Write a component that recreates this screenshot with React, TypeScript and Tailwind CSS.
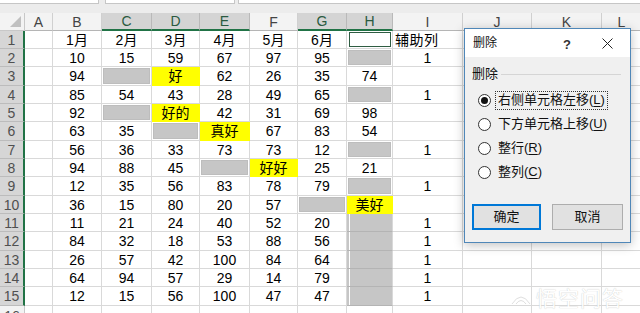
import React from "react";

type Col = { k: string; w: string; sel: boolean };
const cols: Col[] = [
  { k: "A", w: "w-[28px]", sel: false },
  { k: "B", w: "w-[49px]", sel: false },
  { k: "C", w: "w-[50px]", sel: true },
  { k: "D", w: "w-[48px]", sel: true },
  { k: "E", w: "w-[50px]", sel: true },
  { k: "F", w: "w-[48px]", sel: false },
  { k: "G", w: "w-[49px]", sel: true },
  { k: "H", w: "w-[46px]", sel: true },
  { k: "I", w: "w-[70px]", sel: false },
  { k: "J", w: "w-[69px]", sel: false },
  { k: "K", w: "w-[70px]", sel: false },
  { k: "L", w: "w-[40px]", sel: false },
];

const rowH = [
  "h-[18px]", "h-[18px]", "h-[19px]",
  "h-[18px]", "h-[18px]", "h-[19px]",
  "h-[18px]", "h-[18px]", "h-[19px]",
  "h-[18px]", "h-[18px]", "h-[19px]",
  "h-[18px]", "h-[18px]", "h-[19px]",
];

// '#' grey selected blank, '~x' yellow with text, '@' active cell
const data: string[][] = [
  ["", "1月", "2月", "3月", "4月", "5月", "6月", "@", "辅助列"],
  ["", "10", "15", "59", "67", "97", "95", "#", "1"],
  ["", "94", "#", "~好", "62", "26", "35", "74", ""],
  ["", "85", "54", "43", "28", "49", "65", "#", "1"],
  ["", "92", "#", "~好的", "42", "31", "69", "98", ""],
  ["", "63", "35", "#", "~真好", "67", "83", "54", ""],
  ["", "56", "36", "33", "73", "73", "12", "#", "1"],
  ["", "94", "88", "45", "#", "~好好", "25", "21", ""],
  ["", "12", "35", "56", "83", "78", "79", "#", "1"],
  ["", "36", "15", "80", "20", "57", "#", "~美好", ""],
  ["", "11", "21", "24", "40", "52", "20", "#b", "1"],
  ["", "84", "32", "18", "53", "88", "56", "#b", "1"],
  ["", "26", "57", "42", "100", "84", "64", "#b", "1"],
  ["", "64", "94", "57", "29", "14", "79", "#b", "1"],
  ["", "12", "15", "56", "100", "47", "47", "#b", "1"],
];

const font = { fontFamily: '"Liberation Sans", "Noto Sans CJK SC", sans-serif' };

function Cell({ v, col, ci }: { v: string; col: Col; ci: number }) {
  const base = `${col.w} shrink-0 h-full border-r border-b border-[#d9d9d9] flex items-center text-[14px] text-black`;
  if (v === "#") {
    return (
      <div className={`${base} p-[1px]`}>
        <div className="w-full h-full bg-[#c6c6c6] border border-[#bdbdbd]" />
      </div>
    );
  }
  if (v === "#b") {
    return (
      <div className={`${col.w} shrink-0 h-full border-r border-b border-r-[#d9d9d9] border-b-[#b4b4b4] bg-[#c6c6c6] flex pl-[2px]`}>
        <div className="w-full h-full bg-[#c6c6c6] border-l border-white" />
      </div>
    );
  }
  if (v === "@") {
    return (
      <div className={`${base} p-[1px] pl-[2px]`}>
        <div className="w-full h-full bg-white border-[1.5px] border-[#2f5d43]" />
      </div>
    );
  }
  if (v.startsWith("~")) {
    return (
      <div className={`${base} justify-center bg-[#ffff00] border-[#ffff00]`}>
        <span className="leading-none">{v.slice(1)}</span>
      </div>
    );
  }
  if (ci === 8 && v === "辅助列") {
    return (
      <div className={`${base} justify-start pl-[2px]`}>
        <span className="leading-none tracking-[0.5px]">{v}</span>
      </div>
    );
  }
  return (
    <div className={`${base} justify-center`}>
      <span className="leading-none">{v}</span>
    </div>
  );
}

function Radio({ on }: { on: boolean }) {
  return (
    <div className="w-[13px] h-[13px] rounded-full border border-[#333] bg-white flex items-center justify-center shrink-0">
      {on && <div className="w-[7px] h-[7px] rounded-full bg-[#111]" />}
    </div>
  );
}

function Option({ on, text, acc, focus }: { on: boolean; text: string; acc: string; focus?: boolean }) {
  return (
    <div className="flex items-center h-[20px]">
      <Radio on={on} />
      <div
        className={`ml-[4px] px-[2px] h-[19px] flex items-center text-[13px] text-[#111] ${
          focus ? "border border-dotted border-[#333]" : "border border-transparent"
        }`}
      >
        {text}(<span className="underline underline-offset-2">{acc}</span>)
      </div>
    </div>
  );
}

export default function App() {
  return (
    <div className="relative w-[640px] h-[313px] overflow-hidden bg-white" style={font}>
      {/* formula bar strip */}
      <div className="h-[13px] bg-[#ececec] flex items-start">
        <div className="w-[99px] h-[4px] bg-white border-b border-r border-[#c6c6c6]" />
        <div className="ml-[6px] w-[130px] h-[4px] bg-white border-b border-x border-[#c6c6c6]" />
        <div className="ml-[3px] flex-1 h-[4px] bg-white border-b border-l border-[#c6c6c6]" />
      </div>

      {/* column header */}
      <div className="flex h-[18px]">
        <div className="w-[25px] shrink-0 h-full bg-[#f3f3f3] border-r border-b border-[#c8c8c8] relative">
          <div className="absolute right-[3px] bottom-[3px] w-0 h-0 border-l-[11px] border-l-transparent border-b-[11px] border-b-[#c0c0c0]" />
        </div>
        {cols.map((c) => (
          <div
            key={c.k}
            className={`${c.w} shrink-0 h-full flex items-center justify-center text-[14px] ${
              c.sel
                ? "bg-[#d4d4d4] text-[#2a5a40] border-r border-r-[#b9b9b9] border-b-2 border-b-[#217346]"
                : "bg-[#f3f3f3] text-[#444] border-r border-r-[#d0d0d0] border-b border-b-[#b5b5b5]"
            }`}
          >
            <span className="leading-none">{c.k}</span>
          </div>
        ))}
      </div>

      {/* rows */}
      {data.map((row, ri) => (
        <div key={ri} className={`flex ${rowH[ri]}`}>
          <div className="w-[25px] shrink-0 h-full bg-[#d6d6d6] border-b border-[#bcbcbc] border-r-2 border-r-[#217346] flex items-center justify-center text-[14px] text-[#505050]">
            <span className="leading-none">{ri + 1}</span>
          </div>
          {cols.map((c, ci) => (
            <Cell key={c.k} v={row[ci] ?? ""} col={c} ci={ci} />
          ))}
        </div>
      ))}
      {/* row 16 */}
      <div className="flex h-[18px]">
        <div className="w-[25px] shrink-0 h-full bg-[#f3f3f3] border-r border-[#c8c8c8] flex items-start justify-center text-[14px] text-[#505050]">
          <span className="leading-none pt-[3px]">16</span>
        </div>
        {cols.map((c) => (
          <div key={c.k} className={`${c.w} shrink-0 h-full border-r border-[#d9d9d9]`} />
        ))}
      </div>

      {/* dialog */}
      <div className="absolute left-[464px] top-[28px] w-[167px] h-[215px] border border-[#4f87b8] bg-[#f0f0f0] shadow-[0_2px_10px_rgba(0,0,0,0.25)] flex flex-col">
        <div className="h-[28px] bg-white flex items-center text-[12px] text-[#111] relative">
          <span className="ml-[8px]">删除</span>
          <span className="absolute left-[98px] top-[6px] text-[13px] font-bold text-[#333]">?</span>
          <svg className="absolute left-[137px] top-[9px]" width="11" height="11" viewBox="0 0 11 11">
            <path d="M0.5 0.5 L10.5 10.5 M10.5 0.5 L0.5 10.5" stroke="#222" strokeWidth="1" />
          </svg>
        </div>
        <div className="flex items-center mt-[9px] pl-[7px] pr-[9px] h-[16px]">
          <span className="text-[13px] text-[#111]">删除</span>
          <div className="flex-1 ml-[3px] border-t border-[#d5d5d5]" />
        </div>
        <div className="flex flex-col gap-[4px] pl-[13px] mt-[8px]">
          <Option on text="右侧单元格左移" acc="L" focus />
          <Option on={false} text="下方单元格上移" acc="U" />
          <Option on={false} text="整行" acc="R" />
          <Option on={false} text="整列" acc="C" />
        </div>
        <div className="flex mt-[22px] pl-[7px] gap-[11px]">
          <div className="w-[69px] h-[26px] bg-[#e1e1e1] border-2 border-[#0078d7] flex items-center justify-center text-[13px] text-[#111]">
            确定
          </div>
          <div className="w-[71px] h-[26px] bg-[#e1e1e1] border border-[#adadad] flex items-center justify-center text-[13px] text-[#111]">
            取消
          </div>
        </div>
      </div>

      {/* watermark */}
      <div className="absolute left-[510px] top-[282px] flex items-center gap-[4px] text-[21px] text-white [text-shadow:0_0_1px_#b8b8b8] opacity-90">
        <svg width="22" height="20" viewBox="0 0 22 20">
          <path d="M2 16 Q11 2 20 16 M6 16 Q11 9 16 16" fill="none" stroke="#fff" strokeWidth="3" />
          <path d="M2 16 Q11 2 20 16 M6 16 Q11 9 16 16" fill="none" stroke="#c4c4c4" strokeWidth="0.6" />
        </svg>
        <span className="tracking-[1px]" style={{ fontFamily: '"Noto Sans CJK SC", sans-serif' }}>悟空问答</span>
      </div>
    </div>
  );
}
